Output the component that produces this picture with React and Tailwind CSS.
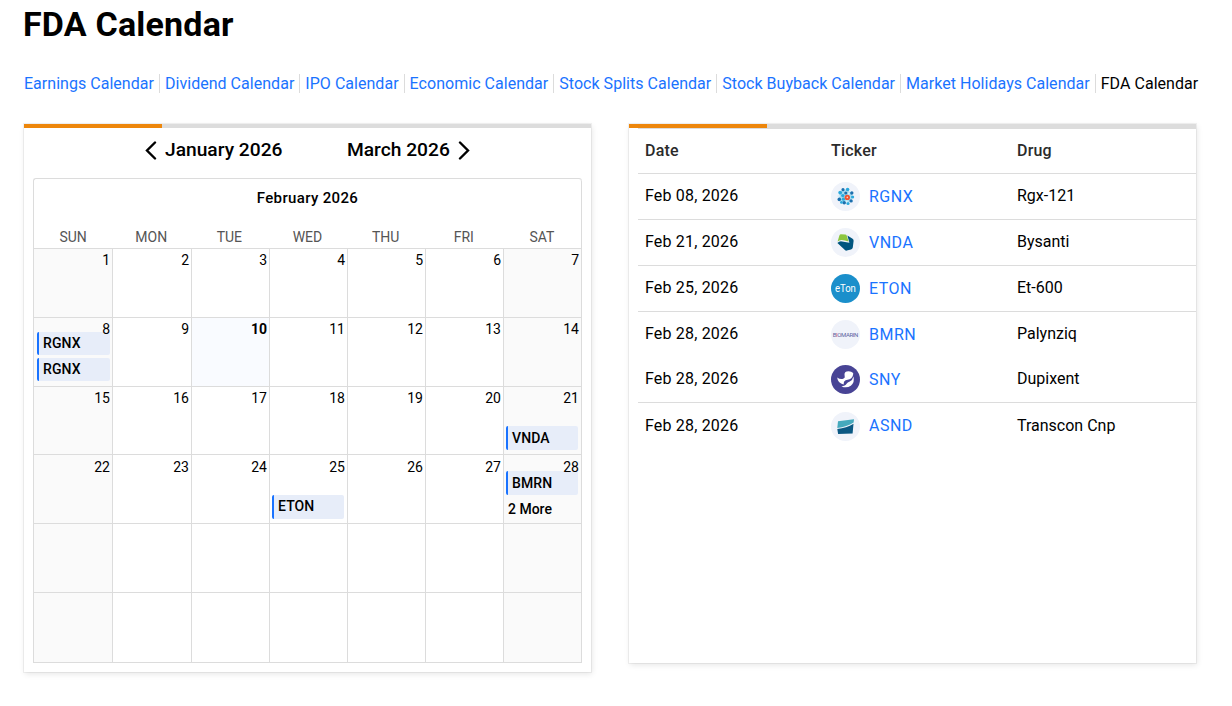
import React from 'react';

const LINKS = [
  'Earnings Calendar',
  'Dividend Calendar',
  'IPO Calendar',
  'Economic Calendar',
  'Stock Splits Calendar',
  'Stock Buyback Calendar',
  'Market Holidays Calendar',
];

const WEEKDAYS = ['SUN', 'MON', 'TUE', 'WED', 'THU', 'FRI', 'SAT'];
const TODAY = 10;

// pos = how the event stack sits inside the cell
const EVENTS = {
  8: { items: ['RGNX', 'RGNX'], pos: 'pb-[5px] pl-[3px] pr-[2px]', size: 'h-[23px] leading-[23px]' },
  21: { items: ['VNDA'], pos: 'pb-1 pl-[2px] pr-[3px]', size: 'h-6 leading-[25px]' },
  25: { items: ['ETON'], pos: 'pb-1 pl-[2px] pr-[3px]', size: 'h-6 leading-[23px]' },
  28: { items: ['BMRN'], more: '2 More', pos: 'pb-[2px] pl-[2px] pr-[3px]', size: 'h-6 leading-[25px]' },
};

const RgnxLogo = () => (
  <svg width="29" height="29" viewBox="0 0 29 29">
    <circle cx="14.5" cy="14.5" r="14.5" fill="#f0f3fa" />
    <circle cx="14.6" cy="14.4" r="6.6" fill="#a9dcf1" />
    <g fill="#1b6fae">
      <circle cx="12" cy="7.7" r="1.6" />
      <circle cx="20.8" cy="11" r="1.7" />
      <circle cx="8.3" cy="17.4" r="1.8" />
      <circle cx="13.2" cy="20.8" r="1.8" />
      <circle cx="20.1" cy="18.9" r="1.7" />
      <circle cx="14.8" cy="11" r="1.6" />
    </g>
    <g fill="#2aa9dc">
      <circle cx="16.6" cy="7.5" r="1.8" />
      <circle cx="9.2" cy="10.6" r="1.9" />
      <circle cx="21.6" cy="15" r="1.6" />
      <circle cx="10.4" cy="20.4" r="1.4" />
      <circle cx="17" cy="21.5" r="1.6" />
      <circle cx="11.8" cy="13.6" r="1.7" />
      <circle cx="12.4" cy="17.2" r="1.6" />
    </g>
    <g fill="#d9f0f9">
      <circle cx="18.9" cy="9" r="1" />
      <circle cx="7.6" cy="14" r="1.3" />
      <circle cx="17.8" cy="11.6" r="1" />
      <circle cx="15.6" cy="19.4" r="1" />
    </g>
    <circle cx="16.3" cy="15.4" r="2.7" fill="#f0522f" />
    <circle cx="16.3" cy="15.4" r="0.8" fill="#fbd0c4" />
  </svg>
);

const VndaLogo = () => (
  <svg width="29" height="29" viewBox="0 0 29 29">
    <circle cx="14.5" cy="14.5" r="14.5" fill="#f0f3fa" />
    <path d="M8.4 7.4 Q8.8 6.2 10 6.2 L14.2 6.4 Q15.2 6.5 15.7 7.6 L17.6 13.4 Q13.6 12.4 10.8 12 Q8.4 11.8 6.6 13.6 Z" fill="#8cc63f" />
    <path d="M6.4 14.9 Q8.4 12.9 11 13.4 L18.4 14.8 L16.4 7.6 L21.6 10.8 Q22.8 11.5 22.6 12.9 L21.8 19.4 Q21.5 21 20 21.4 L15.8 22.6 Q14.8 22.9 13.9 22.1 Z" fill="#00557f" />
  </svg>
);

const EtonLogo = () => (
  <svg width="29" height="29" viewBox="0 0 29 29">
    <circle cx="14.5" cy="14.5" r="14.5" fill="#1b8fcb" />
    <text x="14.4" y="18" textAnchor="middle" textLength="21" lengthAdjust="spacingAndGlyphs" fontSize="11" fill="#fff">
      eTon
    </text>
  </svg>
);

const BmrnLogo = () => (
  <svg width="29" height="29" viewBox="0 0 29 29">
    <circle cx="14.5" cy="14.5" r="14.5" fill="#f0f3fa" />
    <text x="14.5" y="16.7" textAnchor="middle" textLength="25.6" fontSize="6" fill="#5a63a0">
      B<tspan fill="#e0457b">I</tspan>OMARIN
    </text>
  </svg>
);

const SnyLogo = () => (
  <svg width="29" height="29" viewBox="0 0 29 29">
    <circle cx="14.5" cy="14.5" r="14.5" fill="#484495" />
    <path d="M6.2 12.6 Q9.6 15 12.6 13.6 Q14.4 12.6 13.6 10.4 Q13 7.4 15.6 6.5 Q19.6 5.6 22.2 8 Q22.4 12.6 18.6 14.2 L14.6 15.3 Q12.4 16.2 12.6 19.4 Q6.8 18.4 6.2 12.6 Z" fill="#fff" />
    <path d="M22.4 11.6 Q24 17.4 19.8 20.8 Q15.6 23.6 10.4 21.4 Q14.4 21.2 15.6 18.8 Q16.4 17 18.8 16.4 Q21.8 15.2 22.4 11.6 Z" fill="#fff" />
  </svg>
);

const AsndLogo = () => (
  <svg width="29" height="29" viewBox="0 0 29 29">
    <circle cx="14.5" cy="14.5" r="14.5" fill="#f0f3fa" />
    <path d="M7 9.2 Q15 8.1 23 7.2 L22.6 10.4 Q16 14.8 6.3 16 Z" fill="#45a9bd" />
    <path d="M6.3 17.1 Q15.6 16 22.5 11.8 L21.6 21.4 Q14 21.4 7.1 22 Z" fill="#0b5883" />
  </svg>
);

const ROWS = [
  { date: 'Feb 08, 2026', ticker: 'RGNX', drug: 'Rgx-121', Logo: RgnxLogo, cls: 'h-[46px] border-b', text: 'pb-0.5' },
  { date: 'Feb 21, 2026', ticker: 'VNDA', drug: 'Bysanti', Logo: VndaLogo, cls: 'h-[46px] border-b', text: 'pb-0.5' },
  { date: 'Feb 25, 2026', ticker: 'ETON', drug: 'Et-600', Logo: EtonLogo, cls: 'h-[46px] border-b', text: 'pb-0.5' },
  { date: 'Feb 28, 2026', ticker: 'BMRN', drug: 'Palynziq', Logo: BmrnLogo, cls: 'h-[45px]', text: 'pb-0.5' },
  { date: 'Feb 28, 2026', ticker: 'SNY', drug: 'Dupixent', Logo: SnyLogo, cls: 'h-[46px] border-b', text: 'pb-0.5' },
  { date: 'Feb 28, 2026', ticker: 'ASND', drug: 'Transcon Cnp', Logo: AsndLogo, cls: 'h-[46px]', text: '' },
];

const Chevron = ({ d }) => (
  <svg width="12" height="19" viewBox="0 0 12 19" fill="none" stroke="#000" strokeWidth="2.4" strokeLinecap="round">
    <path d={d} />
  </svg>
);

const Card = ({ className, children }) => (
  <div className={`w-[568px] pr-px ${className}`}>
    <div className="h-full bg-white shadow-[0_0_0_1px_rgba(0,0,0,0.05),1px_2px_6px_rgba(0,0,0,0.1)]">
      <div className="h-1 bg-[#dcdcdc]">
        <div className="h-1 w-[138px] bg-[#ed860b]" />
      </div>
      {children}
    </div>
  </div>
);

const DayCell = ({ index }) => {
  const day = index < 28 ? index + 1 : null;
  const col = index % 7;
  const events = EVENTS[day];
  let bg = 'bg-white';
  if (col === 0 || col === 6) bg = 'bg-[#fafafa]';
  if (day === TODAY) bg = 'bg-[#f9fbff]';

  return (
    <div className={`relative border-r border-b border-[#dcdcdc] ${bg}`}>
      {events && (
        <div className={`absolute inset-0 flex flex-col justify-end gap-[3px] ${events.pos}`}>
          {events.items.map((name, i) => (
            <div
              key={i}
              className={`rounded-[2px] border-l-2 border-[#1a73ff] bg-[#e7edf9] pl-1 text-sm font-medium tracking-[0.1px] ${events.size}`}
            >
              {name}
            </div>
          ))}
          {events.more && <div className="h-[23px] pl-[2px] text-sm leading-[23px] font-medium">{events.more}</div>}
        </div>
      )}
      <div
        className={`relative pr-[2px] text-right text-sm leading-[18px] ${index >= 21 ? 'pt-[3px]' : 'pt-[2px]'} ${day === TODAY ? 'font-bold' : ''}`}
      >
        {day}
      </div>
    </div>
  );
};

const Calendar = () => (
  <div className="mx-[9px] rounded-t-[3px] border-t border-l border-[#dcdcdc]">
    <div className="h-[69px] rounded-tr-[3px] border-r border-[#dcdcdc]">
      <div className="pt-[9px] text-center text-[15px] leading-5 font-medium tracking-[0.35px]">February 2026</div>
      <div className="mt-5 grid grid-cols-7 text-center text-sm leading-[18px] text-[#555]">
        {WEEKDAYS.map((d) => (
          <div key={d}>{d}</div>
        ))}
      </div>
    </div>
    <div className="grid grid-cols-[79px_79px_78px_78px_78px_78px_78px] grid-rows-[69px_69px_68px_69px_69px_70px] border-t border-[#dcdcdc]">
      {Array.from({ length: 42 }, (_, i) => (
        <DayCell key={i} index={i} />
      ))}
    </div>
  </div>
);

const App = () => {
  return (
    <div className="h-[706px] overflow-hidden bg-white pl-6 font-['Roboto',sans-serif] text-black">
      <h1 className="-ml-px pt-[3px] text-[34px] leading-[43px] font-bold tracking-[0.2px]">FDA Calendar</h1>

      <nav className="mt-[28px] flex h-[19px] text-base leading-[19px] tracking-[0.03px] whitespace-nowrap">
        {LINKS.map((label) => (
          <a key={label} href="#" className="mr-[5px] border-r border-[#dcdcdc] pr-[5px] text-[#1a73ff]">
            {label}
          </a>
        ))}
        <span>FDA Calendar</span>
      </nav>

      <div className="mt-[31px] flex items-start gap-[37px]">
        <Card className="h-[548px]">
          <div className="flex h-[50px] items-start pt-[9px] pl-[121px] text-[19.2px] leading-[25px] font-medium whitespace-nowrap">
            <div className="flex w-[202px] gap-2">
              <span className="pt-[4px]">
                <Chevron d="M10 1.5 L2 9.5 L10 17.5" />
              </span>
              January 2026
            </div>
            <div className="flex gap-2">
              March 2026
              <span className="pt-[4px]">
                <Chevron d="M2 1.5 L10 9.5 L2 17.5" />
              </span>
            </div>
          </div>
          <Calendar />
        </Card>

        <Card className="h-[539px]">
          <div className="ml-[9px] border-t border-[#dcdcdc]">
            <div className="grid h-[45px] grid-cols-[186px_186px_1fr] items-center border-b border-[#dcdcdc] pl-[7px] text-base font-medium tracking-[0.2px] text-[#2b2b2b]">
              <div>Date</div>
              <div>Ticker</div>
              <div>Drug</div>
            </div>
            {ROWS.map(({ date, ticker, drug, Logo, cls, text }) => (
              <div
                key={ticker}
                className={`grid grid-cols-[186px_186px_1fr] items-center border-[#dcdcdc] pl-[7px] text-base ${cls}`}
              >
                <div className={`tracking-[0.18px] ${text}`}>{date}</div>
                <div className="flex items-center gap-[9px] text-[#1a73ff]">
                  <Logo />
                  <span className="tracking-[0.5px]">{ticker}</span>
                </div>
                <div className={text}>{drug}</div>
              </div>
            ))}
          </div>
        </Card>
      </div>
    </div>
  );
};

export default App;
